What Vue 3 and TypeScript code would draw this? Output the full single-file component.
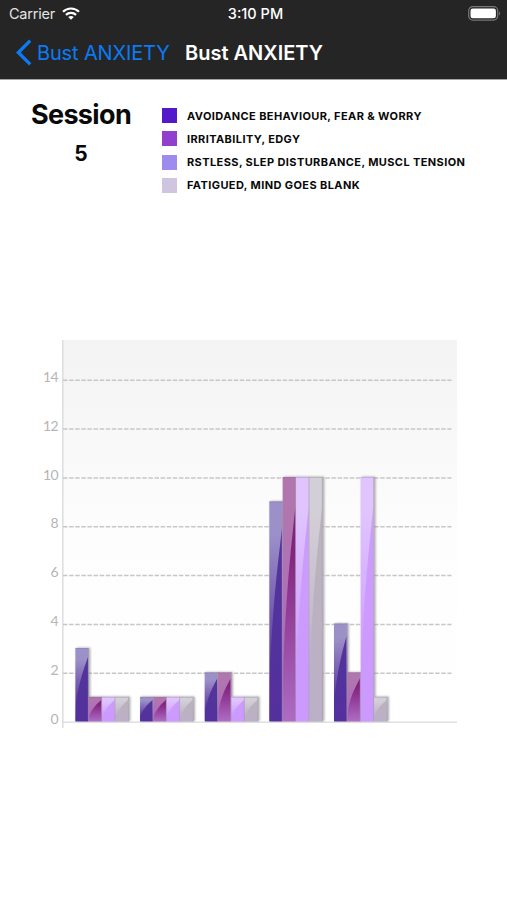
<script setup lang="ts">
interface Series {
  id: string
  label: string
  swatch: string
  top: string
  base: string
  glossTop: string
  glossBase: string
}

const series: Series[] = [
  { id: 'avoid', label: 'AVOIDANCE BEHAVIOUR, FEAR & WORRY', swatch: '#5318c8', top: '#9c90c8', base: '#54309c', glossTop: '#52349c', glossBase: '#54309c' },
  { id: 'irritable', label: 'IRRITABILITY, EDGY', swatch: '#9040cc', top: '#b176ae', base: '#ae69c0', glossTop: '#82237f', glossBase: '#ae6cc4' },
  { id: 'restless', label: 'RSTLESS, SLEP DISTURBANCE, MUSCL TENSION', swatch: '#9d8bee', top: '#dfc4fd', base: '#cc99ff', glossTop: '#cc9cfc', glossBase: '#cc99ff' },
  { id: 'fatigue', label: 'FATIGUED, MIND GOES BLANK', swatch: '#cfc5df', top: '#d3cfd6', base: '#bcb0c7', glossTop: '#bab2be', glossBase: '#bcb0c8' },
]

const sessions: number[][] = [
  [3, 1, 1, 1],
  [1, 1, 1, 1],
  [2, 2, 1, 1],
  [9, 10, 10, 10],
  [4, 2, 10, 1],
]

const ticks = [14, 12, 10, 8, 6, 4, 2, 0]
const unit = 24.43
const baseline = 391.3
const gridY = (v: number) => baseline + 0.9 - v * unit

const bars = sessions.flatMap((values, g) =>
  values.map((v, s) => ({
    key: `${g}-${s}`,
    x: 45.4 + g * 64.65 + s * 13.35,
    y: baseline - v * unit,
    h: v * unit,
    id: series[s].id,
  })),
)

function gloss(h: number): string {
  return `M12.6 ${h * 0.12} C10 ${h * 0.24} 3.8 ${h * 0.42} 0.6 ${h * 0.78} L0.3 ${h} H12.6 Z`
}
</script>

<template>
  <main class="screen">
    <header class="top">
      <div class="status">
        <div class="carrier">
          <span>Carrier</span>
          <svg width="18" height="13" viewBox="0 0 18 13" fill="none" stroke="#fff" stroke-width="2.2">
            <path d="M1 4.8C5.5.4 12.5.4 17 4.8" />
            <path d="M3.9 7.9C6.8 5.2 11.2 5.2 14.1 7.9" />
            <path d="M6.2 10.1Q9 7.8 11.8 10.1L9 12.8Z" fill="#fff" stroke="none" />
          </svg>
        </div>
        <span class="time">3:10 PM</span>
        <svg class="battery" width="33" height="15" viewBox="0 0 33 15">
          <rect x="0.7" y="0.7" width="29" height="13.4" rx="4" fill="none" stroke="#77777a" stroke-width="1.2" />
          <rect x="2.5" y="2.5" width="25.4" height="9.8" rx="2.3" fill="#fff" />
          <path d="M31 5.2Q33 7.4 31 9.6Z" fill="#77777a" />
        </svg>
      </div>
      <nav class="nav">
        <a class="back">
          <svg width="17" height="27" viewBox="0 0 17 27" fill="none" stroke="#0a7bf5" stroke-width="3.3">
            <path d="M15.2 1.6L3.3 13.5L15.2 25.4" />
          </svg>
          <span>Bust ANXIETY</span>
        </a>
        <h1>Bust ANXIETY</h1>
      </nav>
    </header>

    <section class="summary">
      <div class="session">
        <h2>Session</h2>
        <strong>5</strong>
      </div>
      <ul class="legend">
        <li v-for="s in series" :key="s.id">
          <svg width="15" height="15"><rect width="15" height="15" :fill="s.swatch" /></svg>
          <span>{{ s.label }}</span>
        </li>
      </ul>
    </section>

    <svg class="chart" width="447" height="410" viewBox="0 0 447 410">
      <defs>
        <linearGradient id="plot" x1="0" y1="0" x2="0" y2="1">
          <stop offset="0" stop-color="#f3f3f3" />
          <stop offset="0.5" stop-color="#fdfdfd" />
          <stop offset="1" stop-color="#fff" />
        </linearGradient>
        <template v-for="s in series" :key="s.id">
          <linearGradient :id="`body-${s.id}`" x1="0" y1="0" x2="0" y2="1">
            <stop offset="0" :stop-color="s.top" />
            <stop offset="0.15" :stop-color="s.top" />
            <stop offset="0.8" :stop-color="s.base" />
          </linearGradient>
          <linearGradient :id="`gloss-${s.id}`" x1="0" y1="0" x2="0" y2="1">
            <stop offset="0" :stop-color="s.glossTop" />
            <stop offset="0.2" :stop-color="s.glossTop" />
            <stop offset="1" :stop-color="s.glossBase" />
          </linearGradient>
        </template>
        <filter id="shadow" x="-5" y="-5" width="447" height="410" filterUnits="userSpaceOnUse">
          <feGaussianBlur stdDeviation="0.8" />
        </filter>
      </defs>

      <path d="M32 10H425.5Q427 10 427 11.5V392H32Z" fill="url(#plot)" />
      <path d="M32.8 10V398" stroke="#dfdfdf" stroke-width="1.6" />
      <path d="M32 392.2H427" stroke="#dad8dc" stroke-width="1.3" />
      <g v-for="t in ticks" :key="t">
        <line v-if="t" x1="33" :y1="gridY(t)" x2="421.5" :y2="gridY(t)" class="grid" />
        <text x="28" :y="gridY(t) + 1.7" class="tick">{{ t }}</text>
      </g>

      <g v-for="b in bars" :key="b.key">
        <rect :x="b.x + 1" :y="b.y - 0.3" width="13.9" :height="b.h" fill="#777" opacity="0.6" filter="url(#shadow)" />
        <g :transform="`translate(${b.x} ${b.y})`">
          <rect width="13.35" :height="b.h" :fill="`url(#body-${b.id})`" />
          <path :d="gloss(b.h)" :fill="`url(#gloss-${b.id})`" />
          <path :d="`M13 0V${b.h}`" stroke="#aaa0b4" stroke-width="0.9" opacity="0.8" />
          <path d="M0 .5H13" stroke="#806990" opacity="0.25" />
        </g>
      </g>
    </svg>
  </main>
</template>

<style>
body {
  background: #fff;
}
</style>

<style scoped>
.screen {
  width: 507px;
  height: 900px;
  overflow: hidden;
  background: #fff;
  color: #090909;
  font-family: Inter, "Liberation Sans", sans-serif;
}
.top {
  box-sizing: border-box;
  height: 80px;
  background: #252525;
  border-bottom: 1px solid #a5a5a5;
  color: #fff;
}
.status {
  display: grid;
  grid-template-columns: 1fr auto 1fr;
  align-items: center;
  height: 27px;
  padding: 0 6px 0 9px;
  font-size: 14.5px;
}
.carrier {
  display: flex;
  align-items: center;
  gap: 6.5px;
  letter-spacing: -0.22px;
  color: #e4e4e4;
}
.time {
  font-weight: 500;
  font-size: 14.5px;
  margin-left: 1px;
}
.battery {
  justify-self: end;
}
.nav {
  display: flex;
  align-items: center;
  height: 51px;
  padding-left: 15px;
}
.back {
  display: flex;
  align-items: center;
  gap: 5px;
  width: 170px;
  white-space: nowrap;
  color: #0a7bf5;
  font-size: 20px;
  letter-spacing: -0.15px;
}
h1 {
  margin: 0;
  font-size: 20px;
  font-weight: 600;
  white-space: nowrap;
}
.summary {
  display: flex;
  height: 250px;
}
.session {
  width: 162px;
  display: flex;
  flex-direction: column;
  align-items: center;
  padding-top: 19px;
}
h2 {
  margin: 0;
  font-size: 27px;
  line-height: 32px;
  font-weight: 700;
  letter-spacing: -0.65px;
}
strong {
  margin-top: 9px;
  font-size: 21px;
  line-height: 28px;
  font-weight: 700;
}
.legend {
  list-style: none;
  margin: 0;
  padding: 28.3px 0 0;
  display: flex;
  flex-direction: column;
  gap: 8.2px;
}
.legend li {
  display: flex;
  align-items: center;
  gap: 10px;
  height: 15px;
  font-size: 11px;
  line-height: 14px;
  font-weight: 700;
  letter-spacing: 0.4px;
  white-space: nowrap;
}
.chart {
  display: block;
  margin-left: 30px;
}
.grid {
  stroke: #c7c7c7;
  stroke-width: 1.5;
  stroke-dasharray: 4.5 1.6;
}
.tick {
  font-family: Lato, "Liberation Sans", sans-serif;
  font-size: 14px;
  letter-spacing: -0.6px;
  fill: #b5b5b5;
  text-anchor: end;
}
</style>
